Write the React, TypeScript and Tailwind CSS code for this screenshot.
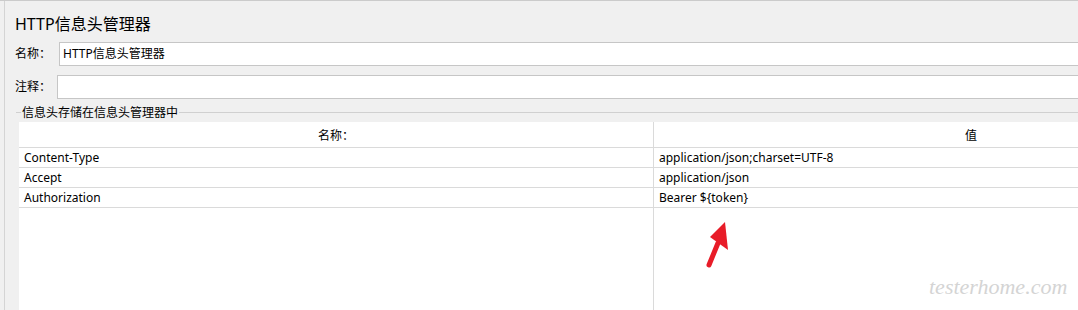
const headers = [
  { name: 'Content-Type', value: 'application/json;charset=UTF-8' },
  { name: 'Accept', value: 'application/json' },
  { name: 'Authorization', value: 'Bearer ${token}' },
];

const font = { fontFamily: '"Noto Sans", "Noto Sans CJK SC", sans-serif' };

function App() {
  return (
    <div
      className="relative h-[310px] w-[1078px] overflow-hidden border-t border-[#cbcbcb] bg-[#f0f0f0] pl-[4px] text-black"
      style={font}
    >
      <div className="flex h-full flex-col border-l border-[#d4d4d4]">
        <h1 className="m-0 pt-[13px] pl-[10px] text-[16px] leading-[20px] font-normal">
          HTTP信息头管理器
        </h1>

        <div className="mt-[8px] flex h-[24px] items-center">
          <span className="w-[54px] shrink-0 pl-[10px] text-[12px]">名称：</span>
          <div className="flex h-full flex-1 items-center border border-r-0 border-[#c6c6c6] bg-white pl-[3px] text-[12px]">
            HTTP信息头管理器
          </div>
        </div>

        <div className="mt-[9px] flex h-[24px] items-center">
          <span className="w-[52px] shrink-0 pl-[10px] text-[12px]">注释：</span>
          <div className="h-full flex-1 border border-r-0 border-[#c6c6c6] bg-white" />
        </div>

        <div className="mt-[7px] flex h-[13px] items-center pl-[11px]">
          <span className="h-px w-[5px] bg-[#d0d0d0]" />
          <span className="px-[1px] text-[12px] leading-[13px]">信息头存储在信息头管理器中</span>
          <span className="h-px flex-1 bg-[#d0d0d0]" />
        </div>

        <div className="mt-[3px] ml-[14px] flex w-[1269px] flex-1 flex-col bg-white text-[12px]">
          <div className="flex h-[26px] border-b border-[#dadada]">
            <div className="flex w-[634px] items-center justify-center pt-[2px]">名称：</div>
            <div className="flex flex-1 items-center justify-center border-l border-[#dadada] pt-[2px]">值</div>
          </div>
          {headers.map((header) => (
            <div className="flex h-[20px] border-b border-[#dadada]" key={header.name}>
              <div className="flex w-[634px] items-center pl-[5px]">{header.name}</div>
              <div className="flex flex-1 items-center border-l border-[#dadada] pl-[5px]">{header.value}</div>
            </div>
          ))}
          <div className="flex flex-1">
            <div className="w-[634px]" />
            <div className="flex-1 border-l border-[#dadada]" />
          </div>
        </div>
      </div>

      <svg className="absolute top-0 left-0" width="1078" height="310" viewBox="0 0 1078 310">
        <line x1="718" y1="242" x2="709" y2="264" stroke="#e81c28" strokeWidth="5" strokeLinecap="round" />
        <polygon points="725,221 710,236 728,249" fill="#e81c28" />
      </svg>

      <span
        className="absolute top-[272px] left-[929px] text-[22px] leading-[28px] text-[#d4d4d4] italic"
        style={{ fontFamily: '"Liberation Serif", serif' }}
      >
        testerhome.com
      </span>
    </div>
  );
}

export default App;
